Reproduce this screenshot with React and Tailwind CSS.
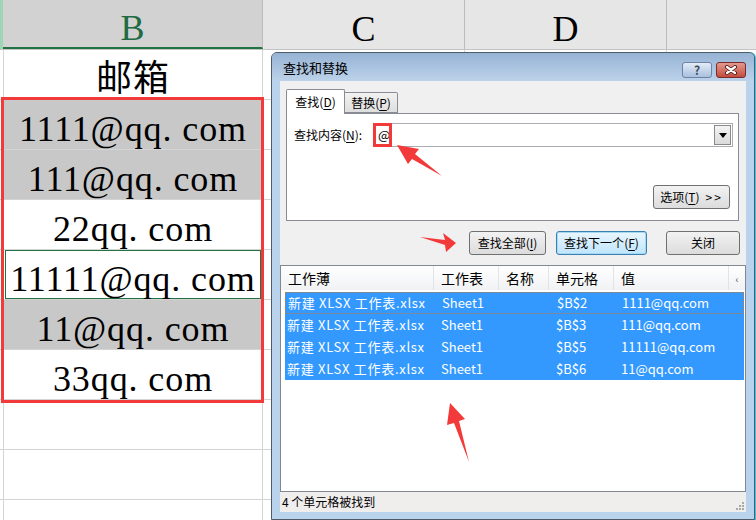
const serif = { fontFamily: '"Liberation Serif", "Noto Sans CJK SC", serif' };

const cells = [
  { text: "邮箱", bg: "bg-white" },
  { text: "1111@qq. com", bg: "bg-[#c8c8c8]" },
  { text: "111@qq. com", bg: "bg-[#c8c8c8]" },
  { text: "22qq. com", bg: "bg-white" },
  { text: "11111@qq. com", bg: "bg-white", active: true },
  { text: "11@qq. com", bg: "bg-[#c8c8c8]" },
  { text: "33qq. com", bg: "bg-white" },
  { text: "", bg: "bg-white" },
  { text: "", bg: "bg-white" },
  { text: "", bg: "bg-white" },
];

const results = [
  ["$B$2", "1111@qq.com"],
  ["$B$3", "111@qq.com"],
  ["$B$5", "11111@qq.com"],
  ["$B$6", "11@qq.com"],
];

function Key({ k }) {
  return (
    <>
      (<span className="underline underline-offset-2">{k}</span>)
    </>
  );
}

function WinButton({ children, width, primary }) {
  return (
    <button
      type="button"
      className={`h-[24px] ${width} rounded-[3px] border text-[12px] text-black flex items-center justify-center ${
        primary
          ? "border-[#3c7fb1] bg-gradient-to-b from-[#eaf6fd] to-[#bee6fd] shadow-[inset_0_0_0_1px_#a7d8f5]"
          : "border-[#707070] bg-gradient-to-b from-[#f2f2f2] to-[#dcdcdc]"
      }`}
    >
      {children}
    </button>
  );
}

function Sheet() {
  return (
    <div style={serif}>
      <div className="flex h-[50px] bg-[#e6e6e6] border-b border-[#c4c4c4]">
        <div className="w-[3px] bg-[#9fd5b7]" />
        <div className="w-[260px] bg-[#d2d2d2] border-b-2 border-[#217346] border-r border-r-[#bcbcbc] flex items-center justify-center pt-[8px] text-[36px] text-[#1f6b43] leading-none">
          B
        </div>
        <div className="w-[202px] border-r border-[#bcbcbc] flex items-center justify-center pt-[8px] text-[36px] text-black leading-none">
          C
        </div>
        <div className="w-[202px] border-r border-[#bcbcbc] flex items-center justify-center pt-[8px] text-[36px] text-black leading-none">
          D
        </div>
        <div className="flex-1" />
      </div>
      {cells.map((c, i) => (
        <div key={i} className="flex h-[50px] border-b border-[#d4d4d4]">
          <div className="w-[4px] border-r border-[#d4d4d4]" />
          <div
            className={`w-[259px] border-r border-[#d4d4d4] ${c.bg} flex items-center justify-center`}
          >
            <div
              className={`w-full h-full flex items-center justify-center pt-[9px] text-[36px] tracking-[0.9px] text-black leading-none whitespace-nowrap ${
                c.active ? "border border-[#217346] mx-[1px]" : ""
              }`}
            >
              {c.text}
            </div>
          </div>
          <div className="w-[202px] border-r border-[#d4d4d4]" />
          <div className="w-[202px] border-r border-[#d4d4d4]" />
          <div className="flex-1" />
        </div>
      ))}
    </div>
  );
}

function Dialog() {
  return (
    <div
      className="absolute left-[271px] top-[52px] w-[484px] h-[468px] rounded-t-[6px] border border-[#4f5b68] bg-[#bad3ec] shadow-[1px_0_0_#39c3e8] flex flex-col"
      style={{ fontFamily: '"Noto Sans CJK SC", "Liberation Sans", sans-serif' }}
    >
      <div className="h-[28px] shrink-0 rounded-t-[5px] bg-gradient-to-b from-[#97b3d4] to-[#bcd2ea] flex items-start">
        <div className="pl-[11px] pt-[5px] text-[13px] text-black">查找和替换</div>
        <div className="ml-auto mt-[9px] mr-[8px] flex gap-[4px]">
          <div className="w-[30px] h-[16px] rounded-[3px] border border-[#6d83a5] bg-gradient-to-b from-[#e3ecf7] to-[#a9c0de] flex items-center justify-center text-[12px] font-bold text-[#3c4a5e] leading-none">
            ?
          </div>
          <div className="w-[30px] h-[16px] rounded-[3px] border border-[#7a2b2b] bg-gradient-to-b from-[#e49a8e] to-[#c24a3d] flex items-center justify-center">
            <svg width="14" height="10" viewBox="0 0 14 10">
              <path d="M3 2 L11 8 M11 2 L3 8" stroke="#4a1a1a" strokeWidth="4" strokeLinecap="round" />
              <path d="M3 2 L11 8 M11 2 L3 8" stroke="#fff" strokeWidth="2.2" strokeLinecap="round" />
            </svg>
          </div>
        </div>
      </div>

      <div className="mx-[8px] h-[431px] bg-[#f0f0f0] flex flex-col text-[12px] text-black">
        <div className="pt-[8px] pl-[6px] flex items-end h-[33px] relative z-10">
          <div className="w-[59px] h-[25px] border border-b-0 border-[#898c95] bg-white flex items-center justify-center rounded-t-[2px]">
            查找<Key k="D" />
          </div>
          <div className="w-[53px] h-[21px] mb-[1px] border border-[#898c95] border-l-0 bg-gradient-to-b from-[#f2f2f2] to-[#dedede] flex items-center justify-center rounded-tr-[2px]">
            替换<Key k="P" />
          </div>
        </div>
        <div className="ml-[6px] w-[453px] h-[108px] -mt-[1px] border border-[#898c95] bg-white flex flex-col">
          <div className="flex items-center pt-[9px]">
            <div className="w-[86px] pl-[7px] whitespace-nowrap">
              查找内容<Key k="N" />:
            </div>
            <div className="w-[360px] h-[24px] border border-[#abadb3] flex items-center relative">
              <span className="pl-[4px] text-[13px]">@</span>
              <div className="absolute left-[-1px] top-[-1px] w-[19px] h-[24px] border-[3px] border-[#f23a3a]" />
              <div className="ml-auto mr-[1px] w-[17px] h-[20px] border border-[#8a8a8a] bg-gradient-to-b from-[#f4f4f4] to-[#dadada] flex items-center justify-center">
                <svg width="8" height="5" viewBox="0 0 8 5">
                  <path d="M0 0 H8 L4 5 Z" fill="#000" />
                </svg>
              </div>
            </div>
          </div>
          <div className="mt-auto mb-[11px] mr-[8px] flex justify-end">
            <WinButton width="w-[77px]">
              选项<Key k="T" />
              <span className="ml-[6px] tracking-[2px]">&gt;&gt;</span>
            </WinButton>
          </div>
        </div>

        <div className="mt-[10px] pl-[189px] flex">
          <WinButton width="w-[77px]">
            查找全部<Key k="I" />
          </WinButton>
          <div className="ml-[10px]">
            <WinButton width="w-[91px]" primary>
              查找下一个<Key k="F" />
            </WinButton>
          </div>
          <div className="ml-[19px]">
            <WinButton width="w-[74px]">关闭</WinButton>
          </div>
        </div>

        <div className="mt-[10px] h-[227px] border border-[#828790] bg-white flex flex-col">
          <div className="h-[24px] flex text-[14px] bg-gradient-to-b from-white to-[#f1f2f4]">
            <div className="w-[153px] pl-[7px] border-r border-[#e2e3e5] flex items-center">工作薄</div>
            <div className="w-[65px] pl-[7px] border-r border-[#e2e3e5] flex items-center">工作表</div>
            <div className="w-[50px] pl-[7px] border-r border-[#e2e3e5] flex items-center">名称</div>
            <div className="w-[65px] pl-[7px] border-r border-[#e2e3e5] flex items-center">单元格</div>
            <div className="w-[115px] pl-[7px] border-r border-[#e2e3e5] flex items-center">值</div>
            <div className="flex-1 flex items-center justify-center text-[10px] text-[#555]">‹</div>
          </div>
          <div className="mt-[2px] ml-[4px] mr-[1px] flex flex-col text-[13px] text-white">
            {results.map(([cell, value], i) => (
              <div
                key={cell}
                className={`h-[22px] flex items-center bg-[#3399ff] ${
                  i === 0 ? "border border-dotted border-[#c27a3a]" : ""
                }`}
              >
                <div className="w-[149px] pl-[2px] whitespace-nowrap tracking-[0.7px]">新建 XLSX 工作表.xlsx</div>
                <div className="w-[65px] pl-[7px]">Sheet1</div>
                <div className="w-[50px]" />
                <div className="w-[65px] pl-[7px]">{cell}</div>
                <div className="flex-1 pl-[7px]">{value}</div>
              </div>
            ))}
          </div>
        </div>

        <div className="h-[20px] bg-[#f0eded] flex items-center pl-[2px] relative">
          4 个单元格被找到
          <svg className="absolute right-[2px] bottom-[2px]" width="10" height="10" viewBox="0 0 10 10">
            {[
              [8, 2],
              [5, 5],
              [8, 5],
              [2, 8],
              [5, 8],
              [8, 8],
            ].map(([x, y]) => (
              <rect key={`${x}-${y}`} x={x} y={y} width="2" height="2" fill="#a8a8a8" />
            ))}
          </svg>
        </div>
      </div>
    </div>
  );
}

function Arrows() {
  return (
    <svg className="absolute left-0 top-0 pointer-events-none" width="756" height="520" viewBox="0 0 756 520">
      <polygon
        points="397,145 419,149 415,154 442,176 412,159 408,164"
        fill="#f23a3a"
      />
      <polygon
        points="456,243 443,233 445,240 420,237 445,245 446,252"
        fill="#f23a3a"
      />
      <polygon
        points="450,403 465,419 459,421 469,462 454,423 447,425"
        fill="#f23a3a"
      />
    </svg>
  );
}

export default function App() {
  return (
    <div className="relative w-[756px] h-[520px] overflow-hidden bg-white">
      <Sheet />
      <div className="absolute left-[1px] top-[97px] w-[263px] h-[306px] border-[3px] border-[#f23a3a]" />
      <Dialog />
      <Arrows />
    </div>
  );
}
